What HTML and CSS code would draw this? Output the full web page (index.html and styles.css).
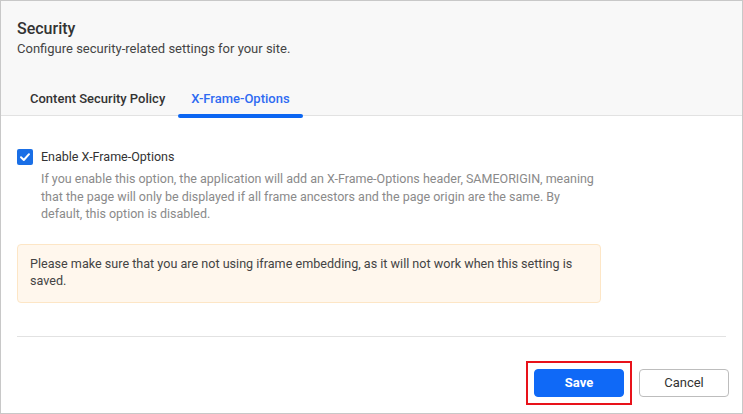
FILE: index.html
```html
<!DOCTYPE html>
<html lang="en">
<head>
<meta charset="utf-8">
<title>Security</title>
<link rel="stylesheet" href="styles.css">
</head>
<body>
<div class="frame">
  <header class="header">
    <h1 class="title">Security</h1>
    <p class="subtitle">Configure security-related settings for your site.</p>
    <nav class="tabs">
      <div class="tab">Content Security Policy</div>
      <div class="tab active">X-Frame-Options</div>
    </nav>
  </header>
  <main class="content">
    <label class="check-row">
      <span class="checkbox">
        <svg width="12" height="12" viewBox="0 0 12 12"><path d="M2 6.3 L4.8 9 L10 3.2" fill="none" stroke="#fff" stroke-width="2" stroke-linecap="round" stroke-linejoin="round"/></svg>
      </span>
      <span class="check-label">Enable X-Frame-Options</span>
    </label>
    <p class="desc">If you enable this option, the application will add an X-Frame-Options header, SAMEORIGIN, meaning<br>that the page will only be displayed if all frame ancestors and the page origin are the same. By<br>default, this option is disabled.</p>
    <div class="warning">Please make sure that you are not using iframe embedding, as it will not work when this setting is saved.</div>
    <hr class="divider">
  </main>
  <footer class="footer">
    <div class="highlight"><button class="btn btn-primary">Save</button></div>
    <button class="btn btn-secondary">Cancel</button>
  </footer>
</div>
</body>
</html>
```

FILE: styles.css
```css
html, body {
  margin: 0;
  padding: 0;
  background: #fff;
}

.frame {
  width: 743px;
  height: 414px;
  box-sizing: border-box;
  border: 1px solid #c8c8c8;
  display: flex;
  flex-direction: column;
  font-family: Roboto, "Liberation Sans", sans-serif;
  color: #333;
  overflow: hidden;
}

.header {
  background: #f8f8f8;
  border-bottom: 1px solid #e2e2e2;
  padding: 18px 16px 0;
}

.title {
  margin: 0;
  font-size: 16px;
  line-height: 20px;
  font-weight: 500;
  color: #333;
}

.subtitle {
  margin: 0;
  font-size: 13px;
  line-height: 20px;
  color: #444;
}

.tabs {
  display: flex;
  margin-top: 24px;
}

.tab {
  position: relative;
  padding: 8px 13px;
  font-size: 13px;
  line-height: 16px;
  font-weight: 500;
  color: #333;
}

.tab.active {
  color: #2f6bf2;
}

.tab.active::after {
  content: "";
  position: absolute;
  left: 0;
  right: 0;
  bottom: -3px;
  height: 4px;
  border-radius: 2px;
  background: #0b66f2;
}

.content {
  padding: 33px 16px 0;
}

.check-row {
  display: flex;
  align-items: center;
  gap: 8px;
}

.checkbox {
  width: 16px;
  height: 16px;
  border-radius: 2px;
  background: #1a6fe6;
  display: flex;
  align-items: center;
  justify-content: center;
}

.check-label {
  font-size: 12.5px;
  line-height: 16px;
  color: #333;
}

.desc {
  margin: 5px 0 0 24px;
  font-size: 12.5px;
  line-height: 17.6px;
  color: #8a8a8a;
  white-space: nowrap;
}

.warning {
  margin-top: 21px;
  width: 584px;
  box-sizing: border-box;
  padding: 10px 12px 13px;
  background: #fff7ed;
  border: 1px solid #fde6c6;
  border-radius: 4px;
  font-size: 12.6px;
  line-height: 17px;
  color: #444;
}

.divider {
  margin: 33px 0 0;
  border: 0;
  border-top: 1px solid #e2e2e2;
  height: 0;
}

.footer {
  display: flex;
  justify-content: flex-end;
  gap: 15px;
  padding: 32px 13px 0 0;
}

.highlight {
  outline: 2px solid #e8121a;
  outline-offset: 6px;
  display: flex;
}

.btn {
  width: 90px;
  height: 28px;
  box-sizing: border-box;
  border-radius: 4px;
  font-family: Roboto, "Liberation Sans", sans-serif;
  font-size: 13px;
  padding: 0;
  cursor: pointer;
}

.btn-primary {
  background: #0f69f7;
  border: 1px solid #0f69f7;
  color: #fff;
  font-weight: 700;
}

.btn-secondary {
  background: #fff;
  border: 1px solid #bdbdbd;
  color: #333;
}
```
